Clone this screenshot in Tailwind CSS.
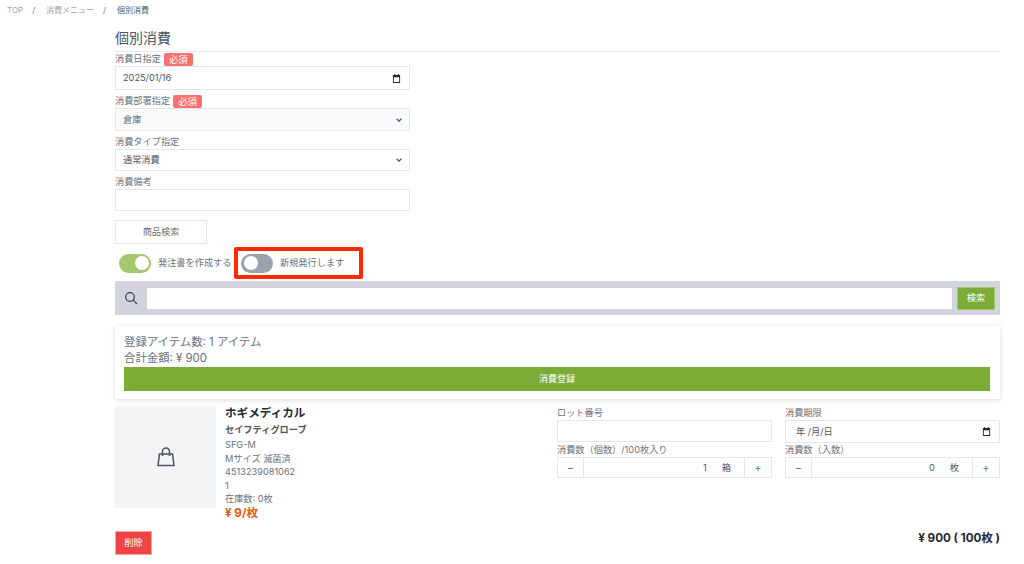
<!DOCTYPE html>
<html lang="ja">
<head>
    <meta charset="UTF-8">
    <title>個別消費</title>
    <script src="https://cdn.jsdelivr.net/npm/@tailwindcss/browser@4"></script>
</head>
<body class="bg-white h-[564px] overflow-hidden font-['Inter','Noto_Sans_CJK_JP',sans-serif] text-[#6b7280]">
    <!-- Breadcrumb -->
    <nav class="flex items-center h-[19px] pl-[7px] text-[8px] text-[#9ca3af]">
        <span>TOP</span>
        <span class="ml-[9px] mr-[11px] text-[#6b7280]">/</span>
        <span>消費メニュー</span>
        <span class="ml-[9px] mr-[11px] text-[#6b7280]">/</span>
        <span class="text-[#4b5563]">個別消費</span>
    </nav>

    <main class="ml-[115px] w-[885px]">
        <h1 class="h-[33px] pt-[8px] text-[14px] leading-[21px] text-[#4b5563] border-b border-[#e5e7eb]">個別消費</h1>

        <!-- Form -->
        <div class="w-[295px] text-[9.2px] leading-[14px]">
            <div class="flex items-center h-[14px]">
                <span>消費日指定</span>
                <span class="ml-[3px] px-[5px] h-[13px] rounded-[2px] bg-[#f87171] text-white text-[9.4px] leading-[13px]">必須</span>
            </div>
            <div class="flex items-center justify-between h-[24px] pl-[7px] pr-[8px] border border-[#e5e7eb] text-[#4b5563]">
                <span>2025/01/16</span>
                <svg class="w-[9px] h-[9px]" viewBox="0 0 10 10"><path fill="#1f2937" fill-rule="evenodd" d="M1 1h8v9H1zM2 3.5v5.5h6V3.5z"/><rect x="2.5" y="0" width="1" height="2" fill="#1f2937"/><rect x="6.5" y="0" width="1" height="2" fill="#1f2937"/></svg>
            </div>
            <div class="flex items-center h-[14px] mt-[4px]">
                <span>消費部署指定</span>
                <span class="ml-[3px] px-[5px] h-[13px] rounded-[2px] bg-[#f87171] text-white text-[9.4px] leading-[13px]">必須</span>
            </div>
            <div class="flex items-center justify-between h-[23px] pl-[7px] pr-[6px] border border-[#e5e7eb] bg-[#f9fafb] text-[#64748b]">
                <span>倉庫</span>
                <svg class="w-[8px] h-[8px]" viewBox="0 0 10 10" fill="none" stroke="#4b5563" stroke-width="1.6"><path d="M2 3.5 5 6.5 8 3.5"/></svg>
            </div>
            <div class="h-[14px] mt-[4px]">消費タイプ指定</div>
            <div class="flex items-center justify-between h-[22px] pl-[7px] pr-[6px] border border-[#e5e7eb] text-[#4b5563]">
                <span>通常消費</span>
                <svg class="w-[8px] h-[8px]" viewBox="0 0 10 10" fill="none" stroke="#4b5563" stroke-width="1.6"><path d="M2 3.5 5 6.5 8 3.5"/></svg>
            </div>
            <div class="h-[14px] mt-[4px]">消費備考</div>
            <div class="h-[22px] border border-[#e5e7eb]"></div>
        </div>

        <button class="block w-[92px] h-[24px] mt-[9px] border border-[#e5e7eb] text-[9.2px] text-[#6b7280]">商品検索</button>

        <!-- Toggles -->
        <div class="flex items-center h-[32px] mt-[3px] text-[9.2px]">
            <span class="flex justify-end items-center w-[32px] h-[19px] ml-[4px] pr-[2px] rounded-full bg-[#a3c86f]">
                <span class="w-[14px] h-[14px] rounded-full bg-white"></span>
            </span>
            <span class="ml-[7px] w-[76px] whitespace-nowrap">発注書を作成する</span>
            <div class="flex items-center w-[129px] h-[32px] pl-[3px] border-[4px] border-[#ff2a00] rounded-[2px]">
                <span class="flex items-center w-[32px] h-[19px] pl-[3px] rounded-full bg-[#9ca3af]">
                    <span class="w-[14px] h-[14px] rounded-full bg-white"></span>
                </span>
                <span class="ml-[7px] whitespace-nowrap">新規発行します</span>
            </div>
        </div>

        <!-- Search bar -->
        <div class="flex items-center h-[34px] mt-[2px] bg-[#d1d5db]">
            <svg class="w-[14px] h-[14px] ml-[9px]" viewBox="0 0 14 14" fill="none" stroke="#374151" stroke-width="1.2"><circle cx="6" cy="6" r="4.3"/><path d="M9.2 9.2 13 13"/></svg>
            <div class="w-[805px] h-[21px] ml-[9px] bg-white"></div>
            <button class="w-[38px] h-[23px] ml-[5px] bg-[#7cac36] border border-[#a3c86f] text-white text-[9.2px]">検索</button>
        </div>

        <!-- Summary -->
        <section class="h-[73px] mt-[11px] pl-[9px] pr-[10px] pt-[8px] bg-white shadow-[0_1px_5px_rgba(0,0,0,0.15)] text-[11.4px] leading-[16px] text-[#6b7280]">
            <p>登録アイテム数: 1 アイテム</p>
            <p>合計金額: ¥ 900</p>
            <button class="block w-full h-[24px] mt-[1px] bg-[#7cac36] text-white text-[9px]">消費登録</button>
        </section>

        <!-- Item -->
        <section class="flex h-[125px] mt-[7px]">
            <div class="flex items-center justify-center w-[101px] h-[102px] bg-[#f3f4f6]">
                <svg class="w-[18px] h-[20px]" viewBox="0 0 18 20" fill="none" stroke="#4b5563" stroke-width="1.5"><path d="M2.5 7h13L17 18.5H1z"/><path d="M5.5 9V4.5a3.5 3.5 0 0 1 7 0V9"/></svg>
            </div>
            <div class="w-[332px] ml-[9px] text-[9.2px] leading-[13.6px] text-[#6b7280]">
                <p class="text-[11.6px] leading-[15px] font-bold text-[#1f2937]">ホギメディカル</p>
                <p class="mt-[1px] mb-[1px] font-bold text-[#4b5563] leading-[15px]">セイフティグローブ</p>
                <p>SFG-M</p>
                <p>Mサイズ 滅菌済</p>
                <p>4513239081062</p>
                <p>1</p>
                <p>在庫数: 0枚</p>
                <p class="text-[11.6px] leading-[15px] font-bold text-[#ea580c]">¥ 9/枚</p>
            </div>
            <div class="w-[215px] text-[9.2px] leading-[14px] text-[#6b7280]">
                <p class="h-[14px]">ロット番号</p>
                <div class="h-[22px] border border-[#e5e7eb]"></div>
                <p class="h-[14px] mt-[1px] whitespace-nowrap">消費数（個数）/100枚入り</p>
                <div class="flex h-[21px] border border-[#e5e7eb]">
                    <span class="flex items-center justify-center w-[26px] border-r border-[#e5e7eb] text-[11px]">−</span>
                    <span class="flex items-center justify-end flex-1 pr-[13px] gap-[15px] text-[#4b5563]"><span>1</span><span>箱</span></span>
                    <span class="flex items-center justify-center w-[27px] border-l border-[#e5e7eb] text-[11px]">+</span>
                </div>
            </div>
            <div class="w-[215px] ml-[13px] text-[9.2px] leading-[14px] text-[#6b7280]">
                <p class="h-[14px]">消費期限</p>
                <div class="flex items-center justify-between h-[23px] pl-[10px] pr-[8px] border border-[#e5e7eb] text-[#4b5563]">
                    <span>年 /月/日</span>
                    <svg class="w-[9px] h-[9px]" viewBox="0 0 10 10"><path fill="#1f2937" fill-rule="evenodd" d="M1 1h8v9H1zM2 3.5v5.5h6V3.5z"/><rect x="2.5" y="0" width="1" height="2" fill="#1f2937"/><rect x="6.5" y="0" width="1" height="2" fill="#1f2937"/></svg>
                </div>
                <p class="h-[14px]">消費数（入数）</p>
                <div class="flex h-[21px] border border-[#e5e7eb]">
                    <span class="flex items-center justify-center w-[26px] border-r border-[#e5e7eb] text-[11px]">−</span>
                    <span class="flex items-center justify-end flex-1 pr-[13px] gap-[15px] text-[#4b5563]"><span>0</span><span>枚</span></span>
                    <span class="flex items-center justify-center w-[27px] border-l border-[#e5e7eb] text-[11px]">+</span>
                </div>
            </div>
        </section>

        <!-- Footer row -->
        <div class="flex justify-between items-start">
            <button class="w-[37px] h-[24px] bg-[#ef4444] border border-[#fca5a5] text-white text-[9.2px]">削除</button>
            <span class="mt-[-1px] text-[11.6px] leading-[16px] font-bold text-[#1f2937]">¥ 900 ( 100枚 )</span>
        </div>
    </main>
</body>
</html>
